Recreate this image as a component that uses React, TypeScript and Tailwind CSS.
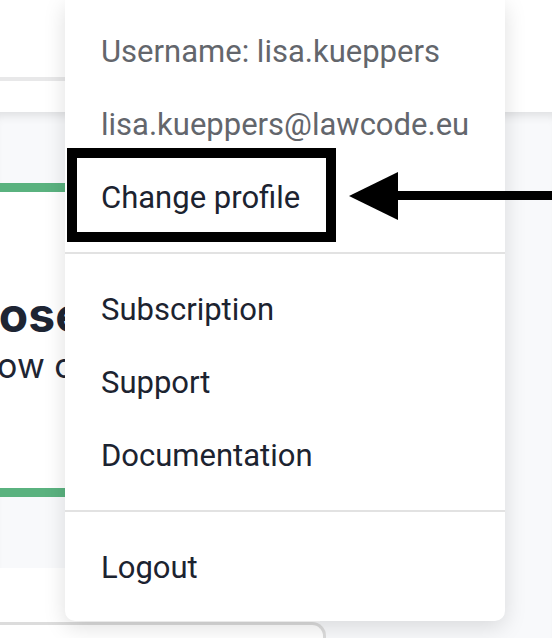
import React from "react";

const gray = "text-[#63666c]";
const dark = "text-[#1c2330]";

function Item({ children, muted }: { children: React.ReactNode; muted?: boolean }) {
  return (
    <div className={`h-[73px] flex items-center px-[36px] text-[31px] leading-[73px] whitespace-nowrap ${muted ? gray : dark}`}>
      {children}
    </div>
  );
}

export default function App() {
  return (
    <div className="relative w-[552px] h-[638px] overflow-hidden bg-white" style={{ fontFamily: "Inter, 'Noto Sans', sans-serif" }}>
      {/* Background page */}
      <div className="h-[112px] bg-white">
        <div className="h-[81px] w-[320px] border-b-4 border-[#e8e8e9] bg-white" />
      </div>
      <div className="h-[526px] bg-[#f8f9fb] shadow-[inset_0_10px_10px_-6px_rgba(0,0,0,0.10)] pt-[71px]">
        <div className="w-[320px] h-[314px] border-y-[9px] border-[#5ab27f] bg-white pt-[99px] overflow-hidden">
          <h2 className="text-[48px] leading-[48px] font-bold text-[#1e2533] whitespace-nowrap -ml-[96px]">Choose your purpose</h2>
          <p className="mt-[7px] text-[34px] leading-[40px] text-[#1e2533] whitespace-nowrap -ml-[23px]">how often do you use it</p>
        </div>
        <div className="h-[71px]" />
        <div className="w-[320px] h-[54px] bg-white" />
        <div className="w-[326px] h-[20px] bg-white border-t-[3px] border-r-[3px] border-[#dcdcdc] rounded-tr-[14px]" />
      </div>

      {/* Dropdown menu */}
      <div
        className="absolute left-[65px] top-0 w-[440px] h-[621px] bg-white rounded-b-[10px] shadow-[0_6px_22px_rgba(0,0,0,0.13)]"
        style={{ fontFamily: "Roboto, 'Liberation Sans', sans-serif" }}
      >
        <div className="pt-[15px] pb-[18px]">
          <Item muted>Username: lisa.kueppers</Item>
          <Item muted>lisa.kueppers@lawcode.eu</Item>
          <Item>Change profile</Item>
        </div>
        <div className="h-[2px] bg-[#e2e2e2]" />
        <div className="pt-[19px] pb-[18px]">
          <Item>Subscription</Item>
          <Item>Support</Item>
          <Item>Documentation</Item>
        </div>
        <div className="h-[2px] bg-[#e2e2e2]" />
        <div className="pt-[19px] pb-[17px]">
          <Item>Logout</Item>
        </div>
      </div>

      {/* Annotation box */}
      <div className="absolute left-[67px] top-[148px] w-[269px] h-[94px] border-[10px] border-black" />

      {/* Annotation arrow */}
      <svg className="absolute left-[349px] top-[172px]" width="203" height="48" viewBox="0 0 203 48">
        <polygon points="0,24 49,0 49,48" fill="#000" />
        <rect x="48" y="19" width="160" height="9" fill="#000" />
      </svg>
    </div>
  );
}
